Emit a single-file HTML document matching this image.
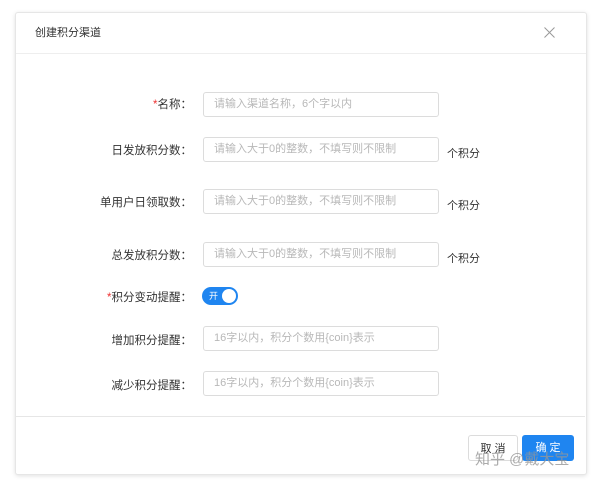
<!DOCTYPE html>
<html><head><meta charset="utf-8"><style>
body{margin:0;width:600px;height:484px;background:#fff;font-family:"Liberation Sans","Noto Sans CJK SC",sans-serif;position:relative;overflow:hidden}
.dlg{position:absolute;left:15px;top:12px;width:570px;height:461px;border:1px solid #e6e6e6;border-radius:3px;box-shadow:0 1px 4px rgba(0,0,0,.12);background:#fff}
.hd{position:absolute;left:0;top:0;right:0;height:40px;border-bottom:1px solid #eee;font-size:11px;color:#333;line-height:40px;padding-left:19px}
.lbl{position:absolute;right:408px;font-size:11.5px;color:#333;text-align:right;white-space:nowrap}
.lbl b{color:#e33;font-weight:normal}
.inp{position:absolute;left:203px;border:1px solid #dcdcdc;border-radius:3px;font-size:11px;color:#b8b8b8;line-height:23px;padding-left:10px;box-sizing:border-box;width:236px;height:25px}
.unit{position:absolute;left:447px;font-size:11px;color:#333}
.ft{position:absolute;left:15px;top:416px;width:570px;border-top:1px solid #e6e6e6}
.btn{position:absolute;top:435px;height:26px;border-radius:3px;font-size:11px;line-height:26px;text-align:center}
</style></head><body>
<div class="dlg"><div class="hd">创建积分渠道</div>
<svg style="position:absolute;right:31px;top:14px" width="11" height="11" viewBox="0 0 11 11"><path d="M0.5 0.5L10.5 10.5M10.5 0.5L0.5 10.5" stroke="#999" stroke-width="1"/></svg></div>
<div class="lbl" style="top:96px"><b>*</b>名称：</div><div class="inp" style="top:92px">请输入渠道名称，6个字以内</div>
<div class="lbl" style="top:142px">日发放积分数：</div><div class="inp" style="top:137px">请输入大于0的整数，不填写则不限制</div><div class="unit" style="top:145px">个积分</div>
<div class="lbl" style="top:194px">单用户日领取数：</div><div class="inp" style="top:189px">请输入大于0的整数，不填写则不限制</div><div class="unit" style="top:197px">个积分</div>
<div class="lbl" style="top:247px">总发放积分数：</div><div class="inp" style="top:242px">请输入大于0的整数，不填写则不限制</div><div class="unit" style="top:250px">个积分</div>
<div class="lbl" style="top:289px"><b>*</b>积分变动提醒：</div>
<div style="position:absolute;left:202px;top:287px;width:36px;height:18px;border-radius:9px;background:#1f85f0"><span style="position:absolute;left:7px;top:2px;font-size:9px;color:#fff">开</span><span style="position:absolute;right:2px;top:2px;width:14px;height:14px;border-radius:7px;background:#fff"></span></div>
<div class="lbl" style="top:332px">增加积分提醒：</div><div class="inp" style="top:326px">16字以内，积分个数用{coin}表示</div>
<div class="lbl" style="top:377px">减少积分提醒：</div><div class="inp" style="top:371px">16字以内，积分个数用{coin}表示</div>
<div class="ft"></div>
<div class="btn" style="left:468px;width:50px;border:1px solid #dcdcdc;box-sizing:border-box;color:#333">取 消</div>
<div class="btn" style="left:522px;width:52px;background:#1f85f0;color:#fff">确 定</div>
<div style="position:absolute;left:475px;top:448px;font-size:15px;color:rgba(150,150,150,.8)">知乎 @戴大宝</div>
</body></html>
